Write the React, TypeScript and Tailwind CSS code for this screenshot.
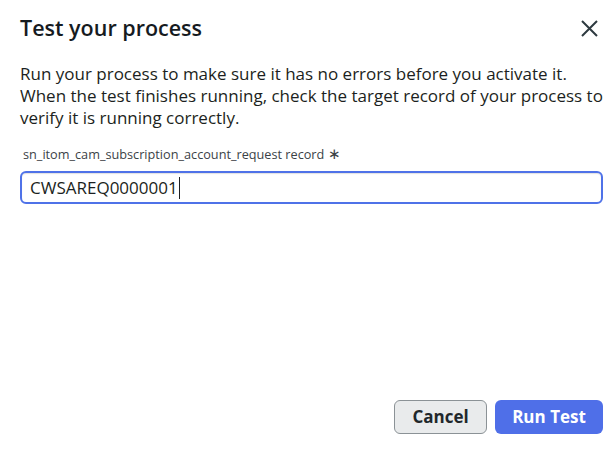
import React from 'react'

export default function App() {
  return (
    <div
      className="w-[616px] h-[460px] bg-white flex flex-col pl-5 pr-[13px] text-[#1c1f21]"
      style={{ fontFamily: '"Open Sans", "Noto Sans", sans-serif' }}
    >
      {/* header */}
      <div className="flex items-center justify-between pt-[13px] h-[43px]">
        <h1 className="text-[21.5px] font-semibold leading-[28px] text-[#161b1f]">Test your process</h1>
        <button className="mr-[5px] text-[#2e3a40]" aria-label="Close">
          <svg width="17" height="17" viewBox="0 0 17 17" fill="none" stroke="currentColor" strokeWidth="2">
            <path d="M1 1 L16 16 M16 1 L1 16" />
          </svg>
        </button>
      </div>

      <p className="mt-[20px] text-[17px] leading-[22px] text-[#1c1f21]">
        Run your process to make sure it has no errors before you activate it.
        <br />
        When the test finishes running, check the target record of your process to
        <br />
        verify it is running correctly.
      </p>

      <label className="mt-[16px] pl-[3px] text-[12.7px] leading-[18px] text-[#3b4247]">
        sn_itom_cam_subscription_account_request record <span className="text-[15px] leading-none">∗</span>
      </label>

      <div className="mt-[8px] h-[33px] rounded-[6px] border-2 border-[#4f72e8] shadow-[inset_0_1px_1px_rgba(0,0,0,0.12)] flex items-center pl-[8px]">
        <span className="text-[17px] leading-none text-[#1c1f21]">CWSAREQ0000001</span>
        <span className="w-px h-[22px] bg-[#1c1f21] ml-px" />
      </div>

      <div className="flex-1" />

      <div className="flex justify-end gap-[8px] pb-[26px]">
        <button className="h-[34px] w-[93px] rounded-[6px] border border-[#8b9296] bg-[#e9ebec] text-[17px] font-bold text-[#1f272b]">
          Cancel
        </button>
        <button className="h-[34px] w-[108px] rounded-[6px] bg-[#4f6fe8] text-[17px] font-bold text-white">
          Run Test
        </button>
      </div>
    </div>
  )
}
